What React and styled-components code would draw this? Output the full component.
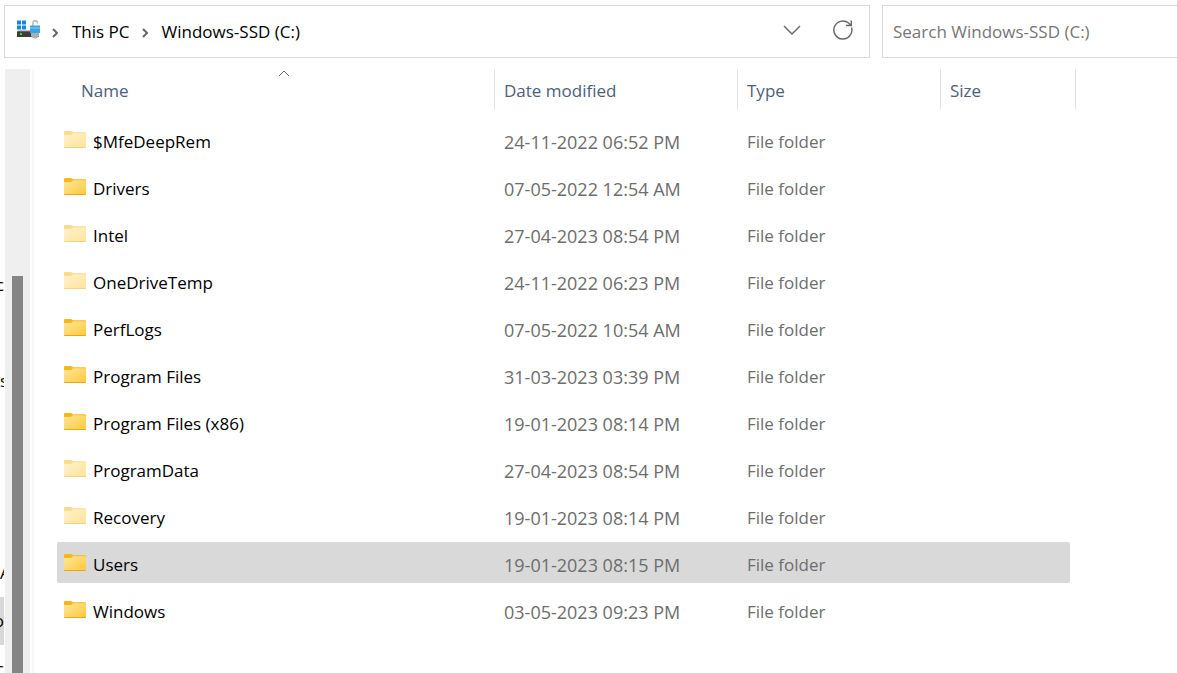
import React from 'react'
import styled, { createGlobalStyle } from 'styled-components'

const colors = {
  text: '#000000',
  muted: '#6d6d6d',
  heading: '#4c607a',
  line: '#d9d9d9',
  divider: '#e5e5e5',
  selected: '#d9d9d9',
}

const GlobalStyle = createGlobalStyle`
  * {
    box-sizing: border-box;
  }
  body {
    margin: 0;
    background-color: #ffffff;
    color: ${colors.text};
    font-family: 'Open Sans', 'Noto Sans', sans-serif;
    font-size: 17px;
    line-height: 24px;
  }
  button, input {
    font: inherit;
    color: inherit;
    background: none;
    border: none;
    padding: 0;
    margin: 0;
  }
`

const Window = styled.div`
  display: flex;
  flex-direction: column;
  height: 100vh;
  overflow: hidden;
`

const TopBar = styled.header`
  display: flex;
  gap: 12px;
  padding: 5px 0 11px 4px;
`

const AddressBar = styled.nav`
  flex: 1;
  display: flex;
  align-items: center;
  height: 53px;
  padding: 0 16px 0 12px;
  border: 1px solid ${colors.line};
`

const DriveSvg = styled.svg`
  width: 23px;
  height: 19px;
  margin-bottom: 5px;
`

const Crumb = styled.a`
  color: ${colors.text};
  text-decoration: none;
  white-space: nowrap;
`

const Chevron = styled.svg`
  width: 7px;
  height: 10px;
  margin: 2px 13px 0 12px;
  fill: none;
  stroke: #666666;
  stroke-width: 2;
`

const Actions = styled.div`
  display: flex;
  align-items: center;
  gap: 32px;
  margin-left: auto;
  padding-bottom: 3px;
`

const IconButton = styled.button`
  display: flex;
  cursor: pointer;
  svg {
    fill: none;
    stroke: #666666;
    stroke-width: 1.4;
  }
`

const SearchBox = styled.input`
  flex: none;
  width: 295px;
  height: 53px;
  padding: 0 10px;
  border: 1px solid ${colors.line};
  border-right: none;
  outline: none;
  &::placeholder {
    color: #767676;
    opacity: 1;
  }
`

const Body = styled.main`
  flex: 1;
  display: flex;
  min-height: 0;
`

const Tree = styled.aside`
  width: 5px;
  padding-right: 1px;
  overflow: hidden;
`

const TreeItem = styled.div`
  display: flex;
  align-items: center;
  justify-content: ${({ $end }) => ($end ? 'flex-end' : 'flex-start')};
  height: 48px;
  overflow: hidden;
  background-color: ${({ $selected }) => ($selected ? colors.selected : 'transparent')};
`

const ScrollTrack = styled.div`
  width: 25px;
  padding: 207px 7px 0 7px;
  background-color: #efefef;
`

const ScrollThumb = styled.div`
  width: 11px;
  height: 100%;
  background-color: #858585;
`

const Splitter = styled.div`
  width: 4px;
  border-right: 2px solid #f7f7f7;
`

const Content = styled.section`
  flex: 1;
  padding-left: 23px;
  overflow: hidden;
`

const FileTable = styled.table`
  width: 1019px;
  table-layout: fixed;
  border-collapse: separate;
  border-spacing: 0 6px;
  margin-top: -6px;
  text-align: left;
`

const Column = styled.col`
  width: ${({ $width }) => $width}px;
`

const HeadRow = styled.tr`
  height: 44px;
`

const HeadCell = styled.th`
  padding: 0;
  padding-left: ${({ $first }) => ($first ? '16px' : '0')};
  vertical-align: top;
  font-weight: normal;
  color: ${colors.heading};
`

const HeadLabel = styled.div`
  position: relative;
  height: 41px;
  padding: 10px 9px 0 ${({ $first }) => ($first ? '8px' : '9px')};
  border-left: ${({ $first }) => ($first ? 'none' : `1px solid ${colors.divider}`)};
  border-right: ${({ $last }) => ($last ? `1px solid ${colors.divider}` : 'none')};
`

const SortArrow = styled.svg`
  position: absolute;
  top: 1px;
  left: 50%;
  width: 12px;
  height: 7px;
  margin-left: -6px;
  fill: none;
  stroke: #666666;
`

const Row = styled.tr`
  height: 41px;
  td {
    background-color: ${({ $selected }) => ($selected ? colors.selected : 'transparent')};
  }
  td:first-child {
    border-radius: 2px 0 0 2px;
  }
  td:nth-child(4) {
    border-radius: 0 2px 2px 0;
  }
  td:last-child {
    background-color: transparent;
  }
`

const Cell = styled.td`
  padding: 4px 10px 0 10px;
  color: ${colors.muted};
  white-space: nowrap;
`

const DateCell = styled(Cell)`
  font-size: 18px;
`

const NameCell = styled(Cell)`
  padding-left: 7px;
  color: ${colors.text};
`

const FileName = styled.div`
  display: flex;
  align-items: center;
  gap: 7px;
`

const FolderSvg = styled.svg`
  width: 22px;
  height: 17px;
  margin-bottom: 5px;
  opacity: ${({ $hidden }) => ($hidden ? 0.5 : 1)};
`

const treeItems = [
  {}, {}, {}, {},
  { label: 'c', end: true },
  {},
  { label: 's' },
  {}, {}, {},
  { label: 'A' },
  { label: 'o', end: true, selected: true },
  { label: 'Yc', end: true },
]

const files = [
  { name: '$MfeDeepRem', date: '24-11-2022 06:52 PM', hidden: true },
  { name: 'Drivers', date: '07-05-2022 12:54 AM' },
  { name: 'Intel', date: '27-04-2023 08:54 PM', hidden: true },
  { name: 'OneDriveTemp', date: '24-11-2022 06:23 PM', hidden: true },
  { name: 'PerfLogs', date: '07-05-2022 10:54 AM' },
  { name: 'Program Files', date: '31-03-2023 03:39 PM' },
  { name: 'Program Files (x86)', date: '19-01-2023 08:14 PM' },
  { name: 'ProgramData', date: '27-04-2023 08:54 PM', hidden: true },
  { name: 'Recovery', date: '19-01-2023 08:14 PM', hidden: true },
  { name: 'Users', date: '19-01-2023 08:15 PM', selected: true },
  { name: 'Windows', date: '03-05-2023 09:23 PM' },
]

const Folder = ({ hidden }) => (
  <FolderSvg viewBox="0 0 22 17" $hidden={hidden}>
    <defs>
      <linearGradient id="folder" x1="0" y1="0" x2="1" y2="1">
        <stop offset="0" stopColor="#ffe69b" />
        <stop offset="1" stopColor="#ffc938" />
      </linearGradient>
    </defs>
    <path d="M0 1Q0 0 1 0H7L9 1.300H21Q22 1.300 22 2.300V8H0Z" fill="#fbb616" />
    <path d="M0 4H7L9 2.300H21Q22 2.300 22 3.300V16Q22 17 21 17H1Q0 17 0 16Z" fill="url(#folder)" />
    <path d="M0 16H22Q22 17 21 17H1Q0 17 0 16Z" fill="#e5a51d" />
  </FolderSvg>
)

const DriveIcon = () => (
  <DriveSvg viewBox="0 0 23 19">
    <path d="M0 0.500H4V4.500H0ZM5 0.500H9V4.500H5ZM0 5.500H4V9.500H0ZM5 5.500H9V9.500H5Z" fill="#1488d8" />
    <path d="M1 10.500H21L22 12.500H0Z" fill="#8c8c8c" />
    <rect y="11.500" width="22" height="5.500" fill="#3d3d3d" />
    <rect x="3" y="13" width="2" height="2" fill="#2fe01f" />
    <path d="M16 6V2.500Q16 0.700 18 0.700Q20.500 0.700 20.500 3.500" fill="none" stroke="#b3b8bc" strokeWidth="1.500" />
    <path d="M14 12H22V15.500Q21 18.500 18 18.500Q15 18.500 14 15.500Z" fill="#a9aeb3" />
    <rect x="13" y="5.500" width="10" height="7.500" fill="#3ba3e4" />
    <rect x="13" y="7.500" width="10" height="1" fill="#8fd0f5" />
  </DriveSvg>
)

const Separator = () => (
  <Chevron viewBox="0 0 7 10">
    <path d="M1 1L5 5L1 9" />
  </Chevron>
)

const App = () => {
  return (
    <Window>
      <GlobalStyle />

      <TopBar>
        <AddressBar aria-label="Address">
          <DriveIcon />
          <Separator />
          <Crumb href="#">This PC</Crumb>
          <Separator />
          <Crumb href="#">Windows-SSD (C:)</Crumb>
          <Actions>
            <IconButton aria-label="Previous locations">
              <svg width="18" height="10" viewBox="0 0 18 10">
                <path d="M1 1L9 9L17 1" />
              </svg>
            </IconButton>
            <IconButton aria-label="Refresh">
              <svg width="20" height="20" viewBox="0 0 20 20">
                <path d="M18.500 7.500A9 9 0 1 1 15.500 3L18 5.300M18.300 0.500V5.500H13" />
              </svg>
            </IconButton>
          </Actions>
        </AddressBar>
        <SearchBox type="search" aria-label="Search" placeholder="Search Windows-SSD (C:)" />
      </TopBar>

      <Body>
        <Tree>
          {treeItems.map((item, i) => (
            <TreeItem key={i} $end={item.end} $selected={item.selected}>
              {item.label}
            </TreeItem>
          ))}
        </Tree>
        <ScrollTrack>
          <ScrollThumb />
        </ScrollTrack>
        <Splitter />
        <Content>
          <FileTable>
            <colgroup>
              <Column $width={437} />
              <Column $width={243} />
              <Column $width={203} />
              <Column $width={130} />
              <Column $width={6} />
            </colgroup>
            <thead>
              <HeadRow>
                <HeadCell $first>
                  <HeadLabel $first>
                    Name
                    <SortArrow viewBox="0 0 12 7">
                      <path d="M1 6L6 1L11 6" />
                    </SortArrow>
                  </HeadLabel>
                </HeadCell>
                <HeadCell><HeadLabel>Date modified</HeadLabel></HeadCell>
                <HeadCell><HeadLabel>Type</HeadLabel></HeadCell>
                <HeadCell colSpan={2}><HeadLabel $last>Size</HeadLabel></HeadCell>
              </HeadRow>
            </thead>
            <tbody>
              {files.map((file) => (
                <Row key={file.name} $selected={file.selected}>
                  <NameCell>
                    <FileName>
                      <Folder hidden={file.hidden} />
                      {file.name}
                    </FileName>
                  </NameCell>
                  <DateCell>{file.date}</DateCell>
                  <Cell>File folder</Cell>
                  <Cell />
                  <Cell />
                </Row>
              ))}
            </tbody>
          </FileTable>
        </Content>
      </Body>
    </Window>
  )
}

export default App
